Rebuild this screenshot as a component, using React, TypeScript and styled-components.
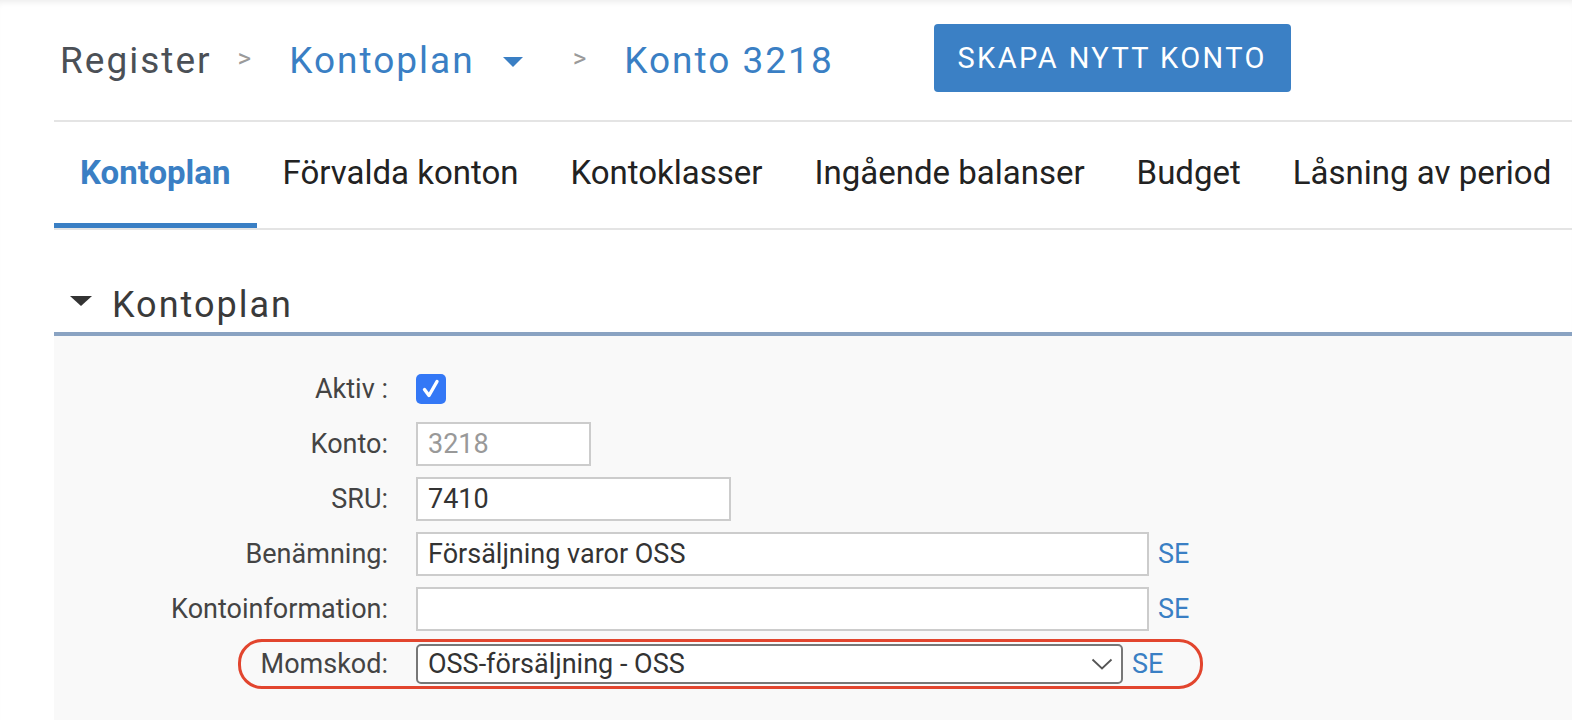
import styled, { createGlobalStyle } from "styled-components";

const GlobalStyle = createGlobalStyle`
    html, body {
        margin: 0;
        padding: 0;
        background: #ffffff;
        font-family: Roboto, "Liberation Sans", Arial, sans-serif;
    }
    * {
        box-sizing: border-box;
    }
`;

const blue = "#3a7fc4";

const Page = styled.div`
    min-height: 100vh;
    box-shadow: inset 0 6px 6px -4px rgba(0, 0, 0, 0.08);
    padding-left: 54px;
    display: flex;
    flex-direction: column;
`;

const TopBar = styled.header`
    height: 122px;
    display: flex;
    align-items: center;
    padding-left: 6px;
    border-bottom: 2px solid #e4e4e4;
`;

const Crumb = styled.span<{ $active?: boolean }>`
    font-size: 37px;
    line-height: 48px;
    letter-spacing: 2px;
    color: ${props => (props.$active ? blue : "#4b5056")};
    margin-top: 2px;
`;

const Separator = styled.span`
    font-size: 26px;
    color: #9a9a9a;
    margin: -4px 38px 0 26px;
`;

const Caret = styled.svg`
    width: 20px;
    height: 10px;
    margin: 4px 50px 0 28px;
    fill: ${blue};
`;

const PrimaryButton = styled.button`
    margin-left: 100px;
    margin-top: -4px;
    width: 357px;
    height: 68px;
    border: none;
    border-radius: 4px;
    background: #3b80c5;
    color: #ffffff;
    font-family: inherit;
    font-size: 29px;
    letter-spacing: 2.4px;
    cursor: pointer;
`;

const TabBar = styled.nav`
    display: flex;
    border-bottom: 2px solid #e4e4e4;
`;

const Tab = styled.a<{ $active?: boolean }>`
    height: 106px;
    padding: 0 26px;
    display: flex;
    align-items: center;
    font-size: 33px;
    font-weight: ${props => (props.$active ? 700 : 400)};
    color: ${props => (props.$active ? blue : "#222222")};
    border-bottom: 5px solid ${props => (props.$active ? blue : "transparent")};
    white-space: nowrap;
    cursor: pointer;
`;

const SectionHeader = styled.div`
    display: flex;
    align-items: center;
    padding: 51px 0 3px 16px;
    border-bottom: 4px solid #8aa3c2;
`;

const SectionToggle = styled.svg`
    width: 22px;
    height: 10px;
    fill: #333333;
    margin: -8px 20px 0 0;
`;

const SectionTitle = styled.h2`
    margin: 0;
    font-size: 36px;
    line-height: 48px;
    font-weight: 400;
    letter-spacing: 2px;
    color: #3a3a3a;
`;

const Panel = styled.section`
    flex: 1;
    background: #f9f9f9;
    padding-top: 31px;
    display: flex;
    flex-direction: column;
    gap: 11px;
`;

const Row = styled.div<{ $highlight?: boolean }>`
    position: relative;
    height: 44px;
    display: flex;
    align-items: center;
    ${props =>
        props.$highlight &&
        `
        &::after {
            content: "";
            position: absolute;
            left: 184px;
            top: -3px;
            bottom: -3px;
            width: 959px;
            border: 3px solid #e2452e;
            border-radius: 24px;
            pointer-events: none;
        }
    `}
`;

const Label = styled.label`
    width: 334px;
    margin-right: 28px;
    text-align: right;
    font-size: 27px;
    color: #444444;
`;

const Check = styled.span`
    width: 30px;
    height: 30px;
    border-radius: 5px;
    background: #3478f6;
    display: flex;
    align-items: center;
    justify-content: center;
`;

const TextInput = styled.input<{ $width: number; $muted?: boolean }>`
    width: ${props => props.$width}px;
    height: 44px;
    border: 2px solid #cccccc;
    background: #ffffff;
    padding: 0 10px;
    font-family: inherit;
    font-size: 27px;
    color: ${props => (props.$muted ? "#999999" : "#333333")};
    outline: none;
`;

const SelectBox = styled.div`
    width: 707px;
    height: 40px;
    border: 2px solid #777777;
    border-radius: 5px;
    background: #ffffff;
    display: flex;
    align-items: center;
    padding-right: 8px;
`;

const Select = styled.select`
    flex: 1;
    height: 100%;
    border: none;
    background: transparent;
    appearance: none;
    padding: 0 10px;
    font-family: inherit;
    font-size: 27px;
    color: #333333;
    outline: none;
`;

const Lang = styled.a`
    margin-left: 9px;
    font-size: 27px;
    color: ${blue};
    cursor: pointer;
`;

const tabs = ["Kontoplan", "Förvalda konton", "Kontoklasser", "Ingående balanser", "Budget", "Låsning av period"];

function App() {
    return (
        <Page>
            <GlobalStyle />
            <TopBar>
                <Crumb>Register</Crumb>
                <Separator>&gt;</Separator>
                <Crumb $active>Kontoplan</Crumb>
                <Caret viewBox="0 0 20 10">
                    <polygon points="0,0 20,0 10,10" />
                </Caret>
                <Separator style={{ marginLeft: 0 }}>&gt;</Separator>
                <Crumb $active>Konto 3218</Crumb>
                <PrimaryButton>SKAPA NYTT KONTO</PrimaryButton>
            </TopBar>

            <TabBar>
                {tabs.map((t, i) => (
                    <Tab key={t} $active={i === 0}>
                        {t}
                    </Tab>
                ))}
            </TabBar>

            <SectionHeader>
                <SectionToggle viewBox="0 0 22 10">
                    <polygon points="0,0 22,0 11,10" />
                </SectionToggle>
                <SectionTitle>Kontoplan</SectionTitle>
            </SectionHeader>

            <Panel>
                <Row>
                    <Label>Aktiv :</Label>
                    <Check>
                        <svg width="20" height="22" viewBox="0 0 20 22">
                            <path d="M3.5 11.5 L8 17.5 L16 3.5" fill="none" stroke="#fff" strokeWidth="3.4" strokeLinecap="round" strokeLinejoin="round" />
                        </svg>
                    </Check>
                </Row>
                <Row>
                    <Label>Konto:</Label>
                    <TextInput $width={175} $muted readOnly value="3218" />
                </Row>
                <Row>
                    <Label>SRU:</Label>
                    <TextInput $width={315} readOnly value="7410" />
                </Row>
                <Row>
                    <Label>Benämning:</Label>
                    <TextInput $width={733} readOnly value="Försäljning varor OSS" />
                    <Lang>SE</Lang>
                </Row>
                <Row>
                    <Label>Kontoinformation:</Label>
                    <TextInput $width={733} readOnly value="" />
                    <Lang>SE</Lang>
                </Row>
                <Row $highlight>
                    <Label>Momskod:</Label>
                    <SelectBox>
                        <Select defaultValue="oss">
                            <option value="oss">OSS-försäljning - OSS</option>
                        </Select>
                        <svg width="22" height="12" viewBox="0 0 22 12">
                            <path d="M1.5 1.5 L11 10.5 L20.5 1.5" fill="none" stroke="#555" strokeWidth="1.8" />
                        </svg>
                    </SelectBox>
                    <Lang>SE</Lang>
                </Row>
            </Panel>
        </Page>
    );
}

export default App;
